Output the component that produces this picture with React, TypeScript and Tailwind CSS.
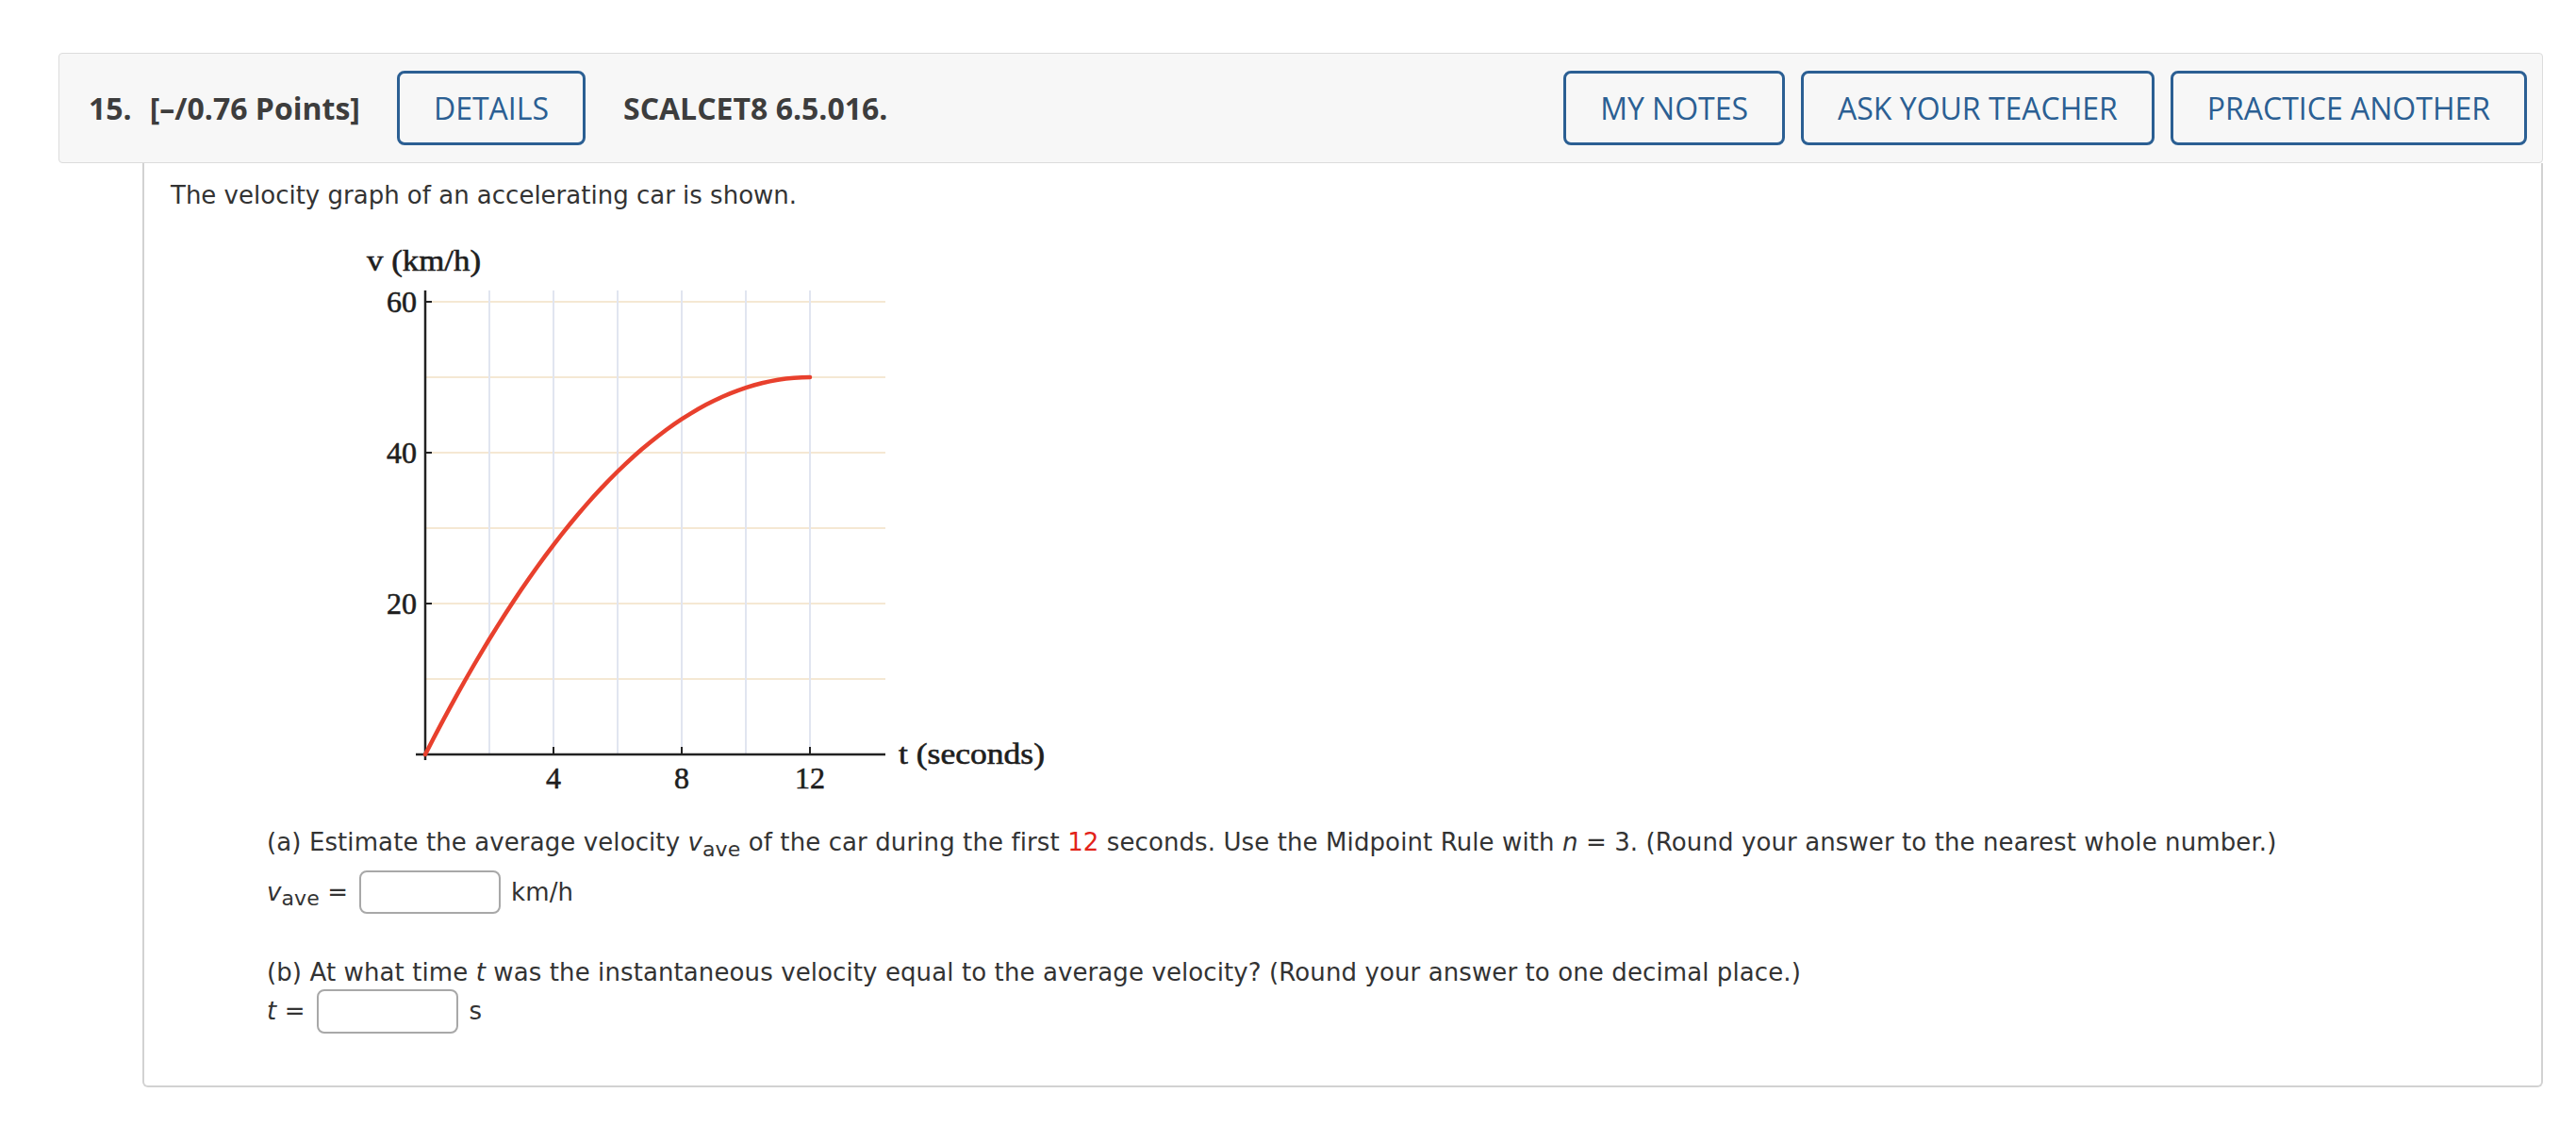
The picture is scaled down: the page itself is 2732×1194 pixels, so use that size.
import React from "react";

const X0 = 71;
const Y0 = 555;
const SX = 34;
const SY = 8;

const curvePath = Array.from({ length: 49 }, (_, i) => {
  const t = i * 0.25;
  const v = 50 * (1 - (1 - t / 12) ** 2);
  return `${i === 0 ? "M" : "L"}${(X0 + SX * t).toFixed(2)},${(Y0 - SY * v).toFixed(2)}`;
}).join(" ");

function Graph() {
  const hLines = [10, 20, 30, 40, 50, 60];
  const vLines = [2, 4, 6, 8, 10, 12];
  const txt = { fill: "#1e1e1e", stroke: "#1e1e1e", strokeWidth: 0.6 };
  return (
    <svg
      width={740}
      height={600}
      viewBox="0 0 740 600"
      className="block ml-[199px] mt-[23px]"
      style={{ fontFamily: '"Liberation Serif", "Times New Roman", serif' }}
    >
      {hLines.map((v) => (
        <line key={"h" + v} x1={X0} x2={559} y1={Y0 - SY * v} y2={Y0 - SY * v} stroke="#f5e8d3" strokeWidth={2} />
      ))}
      {vLines.map((t) => (
        <line key={"v" + t} x1={X0 + SX * t} x2={X0 + SX * t} y1={63} y2={Y0} stroke="#e1e5f0" strokeWidth={2} />
      ))}
      <line x1={X0} x2={X0} y1={63} y2={561} stroke="#222" strokeWidth={2.5} />
      <line x1={61} x2={559} y1={Y0} y2={Y0} stroke="#222" strokeWidth={2.5} />
      {[20, 40, 60].map((v) => (
        <line key={"yt" + v} x1={X0} x2={X0 + 7} y1={Y0 - SY * v} y2={Y0 - SY * v} stroke="#222" strokeWidth={2} />
      ))}
      {[4, 8, 12].map((t) => (
        <line key={"xt" + t} x1={X0 + SX * t} x2={X0 + SX * t} y1={Y0} y2={Y0 - 8} stroke="#222" strokeWidth={2} />
      ))}
      <path d={curvePath} fill="none" stroke="#e8402d" strokeWidth={4.5} strokeLinecap="round" />
      <text x={9} y={42} fontSize={31} {...txt} textLength={121} lengthAdjust="spacingAndGlyphs">
        v (km/h)
      </text>
      <text x={62} y={86} fontSize={32} {...txt} textAnchor="end">60</text>
      <text x={62} y={246} fontSize={32} {...txt} textAnchor="end">40</text>
      <text x={62} y={406} fontSize={32} {...txt} textAnchor="end">20</text>
      <text x={X0 + SX * 4} y={591} fontSize={32} {...txt} textAnchor="middle">4</text>
      <text x={X0 + SX * 8} y={591} fontSize={32} {...txt} textAnchor="middle">8</text>
      <text x={X0 + SX * 12} y={591} fontSize={32} {...txt} textAnchor="middle">12</text>
      <text x={573} y={565} fontSize={31} {...txt} textLength={155} lengthAdjust="spacingAndGlyphs">
        t (seconds)
      </text>
    </svg>
  );
}

function HeaderButton({ children }: { children: React.ReactNode }) {
  return (
    <div className="h-[79px] px-[36px] flex items-center border-[3px] border-[#2b5f93] rounded-[8px] text-[#2b5f93] text-[32px] font-medium leading-none whitespace-nowrap">
      {children}
    </div>
  );
}

export default function App() {
  return (
    <div className="min-h-[1194px] bg-white pl-[62px] pr-[35px] pt-[56px]" style={{ fontFamily: '"DejaVu Sans", Verdana, sans-serif' }}>
      <div
        className="flex items-center border border-[#dcdcdc] bg-[#f7f7f7] rounded-[4px] pl-[31px] pr-[16px] py-[18px] text-[#3d3d3d]"
        style={{ fontFamily: '"Open Sans", sans-serif' }}
      >
        <span className="text-[32px] font-bold leading-none">15.</span>
        <span className="text-[32px] font-bold leading-none ml-[19px]">[–/0.76 Points]</span>
        <div className="ml-[39px]">
          <HeaderButton>DETAILS</HeaderButton>
        </div>
        <span className="text-[32px] font-bold leading-none ml-[40px]">SCALCET8 6.5.016.</span>
        <div className="ml-auto flex items-center gap-[17px]">
          <HeaderButton>MY NOTES</HeaderButton>
          <HeaderButton>ASK YOUR TEACHER</HeaderButton>
          <HeaderButton>PRACTICE ANOTHER</HeaderButton>
        </div>
      </div>

      <div className="ml-[89px] border-2 border-t-0 border-[#d2d2d2] rounded-b-[6px] bg-white pl-[28px] pt-[19px] pb-[55px] text-[#333] text-[26px] leading-[30px]">
        <p>The velocity graph of an accelerating car is shown.</p>
        <Graph />
        <div className="ml-[102px] mt-[33px] tracking-[0.1px]">
          <p className="h-[30px]">
            (a) Estimate the average velocity <i>v</i>
            <sub className="text-[22px]">ave</sub> of the car during the first{" "}
            <span className="text-[#e2231a]">12</span> seconds. Use the Midpoint Rule with <i>n</i> = 3. (Round your
            answer to the nearest whole number.)
          </p>
          <div className="mt-[14px] h-[47px] flex items-center">
            <span>
              <i>v</i>
              <sub className="text-[22px]">ave</sub> =
            </span>
            <div className="ml-[12px] w-[150px] h-[46px] border-2 border-[#a8a8a8] rounded-[8px] bg-white" />
            <span className="ml-[11px]">km/h</span>
          </div>
          <p className="mt-[47px] h-[30px]">
            (b) At what time <i>t</i> was the instantaneous velocity equal to the average velocity? (Round your answer
            to one decimal place.)
          </p>
          <div className="mt-[2px] h-[48px] flex items-center">
            <span>
              <i>t</i> =
            </span>
            <div className="ml-[12px] w-[150px] h-[47px] border-2 border-[#a8a8a8] rounded-[8px] bg-white" />
            <span className="ml-[12px]">s</span>
          </div>
        </div>
      </div>
    </div>
  );
}
